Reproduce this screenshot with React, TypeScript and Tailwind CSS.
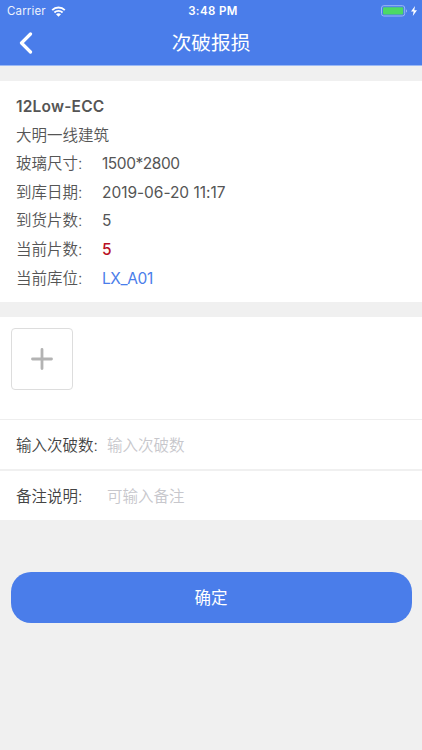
const details = [
  { label: '玻璃尺寸:', value: '1500*2800', color: 'tracking-[-0.45px]' },
  { label: '到库日期:', value: '2019-06-20 11:17', color: 'tracking-[-0.04px]' },
  { label: '到货片数:', value: '5', color: 'text-[#555555]' },
  { label: '当前片数:', value: '5', color: 'text-[#b80f24] font-medium' },
  { label: '当前库位:', value: 'LX_A01', color: 'text-[#4a7dea] tracking-[-0.4px]' },
]

const StatusBar = () => {
  return (
    <div className="grid h-[22px] grid-cols-3 items-center pr-[5px] pl-[7px] text-[11.5px] leading-none">
      <div className="flex items-center gap-[5px]">
        <span className="pt-[2px] tracking-[0.15px] opacity-90">Carrier</span>
        <svg className="h-[11px] w-[15px]" viewBox="0 0 14 11" fill="none" stroke="currentColor" strokeWidth="1.9">
          <path d="M0.7 4.1C4.2 0.6 9.8 0.6 13.3 4.1" />
          <path d="M2.9 6.5C5.2 4.3 8.8 4.3 11.1 6.5" />
          <path d="M4.5 8.3C6 6.9 8 6.9 9.5 8.3L7 10.8Z" fill="currentColor" stroke="none" />
        </svg>
      </div>
      <span className="pt-[2px] pl-[2px] text-center font-semibold tracking-[0.4px] whitespace-nowrap">3:48 PM</span>
      <div className="flex items-center justify-end gap-[3px]">
        <svg className="h-[12px] w-[27px]" viewBox="0 0 27 12" fill="none">
          <rect x="0.5" y="0.7" width="23.2" height="10.3" rx="2.3" stroke="#9bb9f5" />
          <rect x="2" y="2.2" width="20.2" height="7.3" rx="1" fill="#4cd964" />
          <path d="M25 4.2C26.3 4.6 26.3 7.1 25 7.5Z" fill="#9bb9f5" />
        </svg>
        <svg className="h-[10px] w-[6px]" viewBox="0 0 6 10" fill="currentColor">
          <path d="M4 0L0 5.6H2.6L1.8 10L6 4.2H3.3Z" />
        </svg>
      </div>
    </div>
  )
}

const App = () => {
  return (
    <div className="min-h-screen w-full bg-[#f0f0f0] font-[Inter,'Noto_Sans_CJK_SC',sans-serif] text-[15.5px] text-[#555555] [font-feature-settings:'calt'_0]">
      <header className="h-[66px] border-b border-[#9bb9f5] bg-[#4a7dea] text-white">
        <StatusBar />
        <div className="grid h-[42px] grid-cols-[60px_1fr_60px] items-center">
          <button className="pl-[19px]">
            <svg className="h-[22px] w-[14px]" viewBox="0 0 14 22" fill="none" stroke="currentColor" strokeWidth="3.2" strokeLinecap="round" strokeLinejoin="round">
              <path d="M11.5 2L2.5 11L11.5 20" />
            </svg>
          </button>
          <h1 className="pt-[2px] text-center text-[19.7px] leading-none font-normal">次破报损</h1>
        </div>
      </header>

      <section className="mt-[15px] h-[221px] bg-white px-4 pt-[12px] leading-[28.6px]">
        <p className="font-semibold tracking-[0.2px]">12Low-ECC</p>
        <p className="font-[350]">大明一线建筑</p>
        {details.map((item) => (
          <div key={item.label} className="flex">
            <span className="w-[86px] font-[350]">{item.label}</span>
            <span className={item.color}>{item.value}</span>
          </div>
        ))}
      </section>

      <section className="mt-[15px] bg-white">
        <div className="h-[103px] border-b border-[#eeeeee] pt-[11px] pl-[11px]">
          <button className="flex h-[62px] w-[62px] items-center justify-center rounded border border-[#dddddd]">
            <svg className="h-[22px] w-[22px]" viewBox="0 0 22 22" stroke="#b3b3b3" strokeWidth="2.8" strokeLinecap="round">
              <path d="M11 1.5V20.5M1.5 11H20.5" />
            </svg>
          </button>
        </div>
        <label className="flex h-[51px] items-center border-b-2 border-[#f0f0f0] pt-[2px] pl-4">
          <span className="w-[91px] font-[350] text-[#444444]">输入次破数:</span>
          <input className="w-[280px] font-[350] outline-none placeholder:text-[#c7c7cc]" placeholder="输入次破数" />
        </label>
        <label className="flex h-[49px] items-center pt-[2px] pl-4">
          <span className="w-[91px] font-[350] text-[#444444]">备注说明:</span>
          <input className="w-[280px] font-[350] outline-none placeholder:text-[#c7c7cc]" placeholder="可输入备注" />
        </label>
      </section>

      <div className="px-[10.5px] pt-[52px]">
        <button className="h-[51px] w-full rounded-[20px] bg-[#4a7dea] pt-[2px] text-[16.5px] text-white">确定</button>
      </div>
    </div>
  )
}
export default App
